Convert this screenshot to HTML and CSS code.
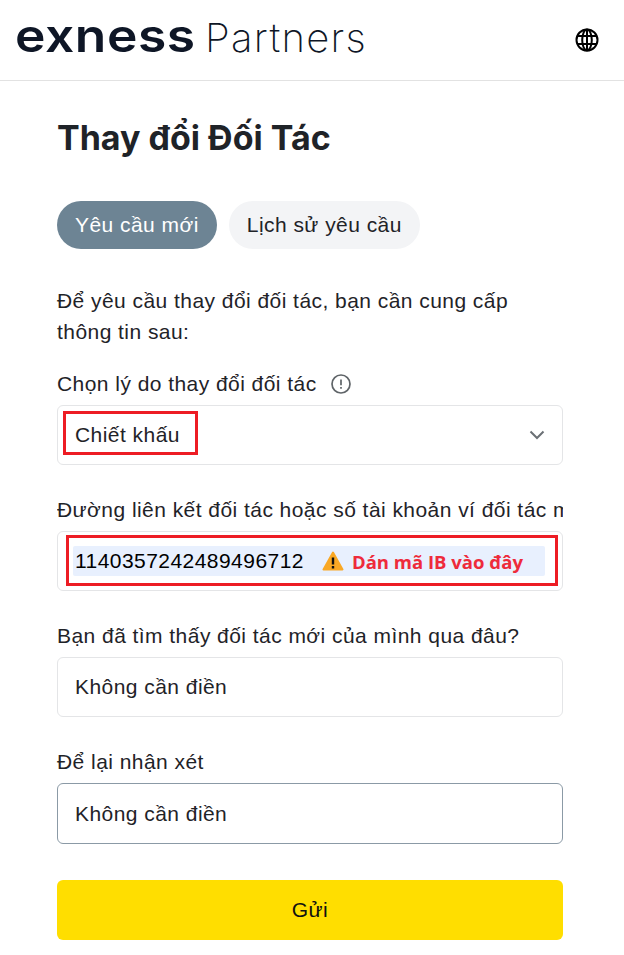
FILE: index.html
```html
<!DOCTYPE html>
<html>
	<head>
		<meta charset="UTF-8">
		<title>Thay đổi Đối Tác</title>
		<link rel="stylesheet" href="styles.css">
	</head>
	<body>
		<div class="header">
			<div class="logo"><span class="logo-name">exness</span><span class="logo-sub">Partners</span></div>
			<svg class="globe" width="26" height="26" viewBox="0 0 26 26" fill="none" stroke="#000" stroke-width="2">
				<circle cx="13" cy="13" r="10.5"/>
				<ellipse cx="13" cy="13" rx="4.8" ry="10.5"/>
				<path d="M13 2.5v21M3.4 9h19.2M3.4 17h19.2"/>
			</svg>
		</div>
		<div class="content">
			<h1>Thay đổi Đối Tác</h1>
			<div class="tabs">
				<div class="tab current">Yêu cầu mới</div>
				<div class="tab">Lịch sử yêu cầu</div>
			</div>
			<p class="intro">Để yêu cầu thay đổi đối tác, bạn cần cung cấp thông tin sau:</p>
			<div class="field first">
				<div class="label">Chọn lý do thay đổi đối tác
					<svg class="info" width="20" height="20" viewBox="0 0 20 20" fill="none" stroke="#5f6468" stroke-width="1.7">
						<circle cx="10" cy="10" r="9"/>
						<path d="M10 5.400v5.800M10 13v1.800"/>
					</svg>
				</div>
				<div class="input select">Chiết khấu
					<svg class="chevron" width="16" height="10" viewBox="0 0 16 10" fill="none" stroke="#6b7075" stroke-width="2">
						<path d="M1.5 1.5L8 8l6.500-6.500"/>
					</svg>
					<div class="mark mark-select"></div>
				</div>
			</div>
			<div class="field">
				<div class="label clip">Đường liên kết đối tác hoặc số tài khoản ví đối tác mới</div>
				<div class="input">
					<div class="autofill">1140357242489496712</div>
					<div class="paste-note">
						<svg width="22" height="20" viewBox="0 0 22 20">
							<path d="M11 1.500L20.500 18.500H1.500z" fill="#f9a825" stroke="#f9a825" stroke-width="2" stroke-linejoin="round"/>
							<path d="M11 6.500v7M11 15v2.400" stroke="#111" stroke-width="2.400"/>
						</svg>
						Dán mã IB vào đây
					</div>
					<div class="mark mark-code"></div>
				</div>
			</div>
			<div class="field">
				<div class="label">Bạn đã tìm thấy đối tác mới của mình qua đâu?</div>
				<div class="input">Không cần điền</div>
			</div>
			<div class="field">
				<div class="label">Để lại nhận xét</div>
				<div class="input focus">Không cần điền</div>
			</div>
			<div class="submit">Gửi</div>
		</div>
	</body>
</html>
```

FILE: styles.css
```css
*{
	margin: 0;
	padding: 0;
	box-sizing: border-box;
}
body{
	font-family: "Liberation Sans", Arial, sans-serif;
	font-size: 21px;
	letter-spacing: 0.45px;
	color: #1f2328;
	background: white;
}
.header{
	height: 81px;
	border-bottom: 1px solid #e2e2e2;
	padding: 0 24px 0 15px;
	display: flex;
	align-items: center;
	justify-content: space-between;
}
.logo{
	display: flex;
	align-items: baseline;
	color: #0e1626;
	font-family: "Inter", sans-serif;
	letter-spacing: 0;
	margin-top: -10px;
}
.logo-name{
	display: inline-block;
	width: 190px;
	font-size: 46px;
	font-weight: 600;
	letter-spacing: 0.5px;
	transform: scaleX(1.12);
	transform-origin: left;
}
.logo-sub{
	font-size: 40px;
	font-weight: 250;
	letter-spacing: 1.3px;
}
.content{
	padding: 35px 61px 15px 57px;
}
h1{
	font-family: "Inter", sans-serif;
	font-size: 34px;
	font-weight: 700;
	line-height: 44px;
	letter-spacing: 0;
}
.tabs{
	display: flex;
	gap: 12px;
	margin-top: 41px;
}
.tab{
	height: 48px;
	line-height: 48px;
	padding: 0 18px;
	border-radius: 24px;
	background: #f3f4f6;
}
.tab.current{
	background: #6d8494;
	color: white;
}
.intro{
	margin-top: 36px;
	line-height: 31px;
}
.field{
	margin-top: 33px;
}
.field.first{
	margin-top: 25px;
}
.label{
	line-height: 24px;
	height: 24px;
	margin-bottom: 9px;
	display: flex;
	align-items: center;
	gap: 14px;
}
.label.clip{
	display: block;
	white-space: nowrap;
	overflow: hidden;
}
.input{
	height: 60px;
	border: 1px solid #e4e5e7;
	border-radius: 6px;
	padding: 0 17px;
	display: flex;
	align-items: center;
	position: relative;
}
.input.focus{
	height: 61px;
	border-color: #8b9aa6;
}
.select{
	justify-content: space-between;
}
.autofill{
	width: 472px;
	height: 30px;
	line-height: 30px;
	margin-left: -2px;
	padding-left: 2px;
	background: #e8f0fe;
	color: #000;
	border-radius: 2px;
	flex: none;
}
.paste-note{
	position: absolute;
	left: 264px;
	top: 0;
	bottom: 0;
	display: flex;
	align-items: center;
	gap: 8px;
	color: #ee2b3b;
	font-family: "Open Sans", sans-serif;
	font-size: 18.5px;
	letter-spacing: 0;
	font-weight: 700;
	white-space: nowrap;
}
.mark{
	position: absolute;
	border: 3px solid #ed1c24;
}
.mark-select{
	left: 5px;
	top: 5px;
	width: 135px;
	height: 44px;
}
.mark-code{
	left: 8px;
	top: 3px;
	width: 492px;
	height: 51px;
}
.submit{
	height: 60px;
	line-height: 60px;
	margin-top: 36px;
	background: #ffde00;
	border-radius: 6px;
	text-align: center;
	color: #111;
}
```
